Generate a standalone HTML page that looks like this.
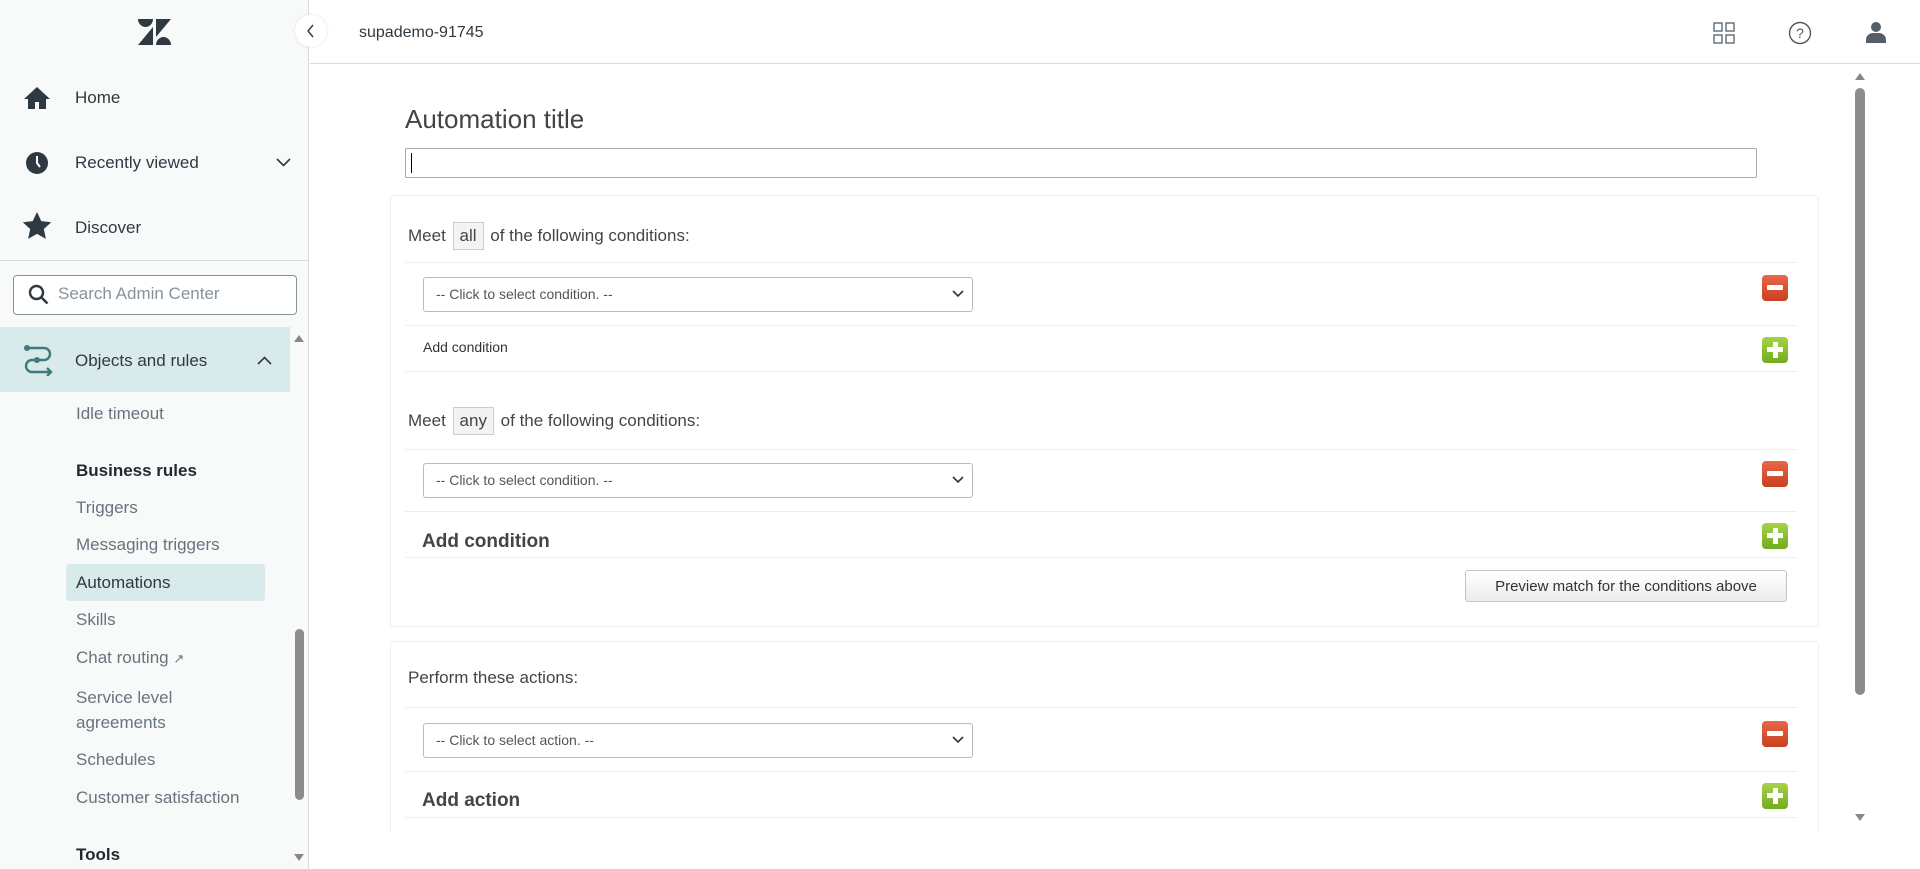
<!DOCTYPE html>
<html><head><meta charset="utf-8"><style>
*{box-sizing:border-box;margin:0;padding:0}
body{width:1920px;height:869px;overflow:hidden;background:#fff;font-family:"Liberation Sans",sans-serif;position:relative;color:#2f3941}
.a{position:absolute;white-space:nowrap}
.side{position:absolute;left:0;top:0;width:309px;height:869px;background:#f8f9f9;border-right:1px solid #d8dcde}
.nav{font-size:17px;color:#2f3941;line-height:20px}
.sub{font-size:17px;color:#68737d;line-height:20px;left:76px}
.sel{position:absolute;height:35px;border:1px solid #bbb;border-radius:3px;background:#fff;font-size:14px;color:#555;padding:8px 0 0 12px}
.sel svg{position:absolute;right:8px;top:12px}
.minus,.plus{position:absolute;width:26px;height:26px;border-radius:4px}
.minus{background:linear-gradient(#e8674a,#c8401f)}
.plus{background:linear-gradient(#a6d24a,#72ab1e)}
.minus:after{content:"";position:absolute;left:5px;top:10px;width:16px;height:5px;background:#fff;border-radius:1px}
.plus:after{content:"";position:absolute;left:5px;top:10px;width:16px;height:5px;background:#fff}
.plus:before{content:"";position:absolute;left:10.5px;top:5px;width:5px;height:16px;background:#fff}
.line{position:absolute;height:1px;background:#eeeeee}
.lab{font-size:17px;color:#444}
</style></head><body>
<div class="side">
 <svg class="a" style="left:138px;top:19px" width="33" height="26" viewBox="0 0 33 26"><path d="M0 0h15a7.5 8 0 0 1-15 0z" fill="#2f3941"/><polygon points="0,26 15,26 15,8" fill="#2f3941"/><polygon points="18,0 33,0 18,18" fill="#2f3941"/><path d="M18 26a7.5 8 0 0 1 15 0z" fill="#2f3941"/></svg>
 <svg class="a" style="left:23px;top:86px" width="28" height="24" viewBox="0 0 28 24"><path d="M14 1L1 13h4v10h7v-7h4v7h7V13h4z" fill="#2f3941"/></svg>
 <div class="a nav" style="left:75px;top:88px">Home</div>
 <svg class="a" style="left:25px;top:151px" width="24" height="24" viewBox="0 0 24 24"><circle cx="12" cy="12" r="11" fill="#2f3941"/><path d="M12 5v7l3 4" stroke="#fff" stroke-width="2" fill="none"/></svg>
 <div class="a nav" style="left:75px;top:153px">Recently viewed</div>
 <svg class="a" style="left:276px;top:158px" width="15" height="9" viewBox="0 0 15 9"><path d="M1 1l6.5 6.5L14 1" stroke="#2f3941" stroke-width="1.6" fill="none"/></svg>
 <svg class="a" style="left:22px;top:212px" width="30" height="28" viewBox="0 0 24 23"><path d="M12 0l3.5 7.5 8.2.9-6.1 5.6 1.7 8.1L12 18l-7.3 4.1 1.7-8.1L.3 8.4l8.2-.9z" fill="#2f3941"/></svg>
 <div class="a nav" style="left:75px;top:218px">Discover</div>
 <div class="a" style="left:0;top:260px;width:309px;height:1px;background:#d8dcde"></div>
 <div class="a" style="left:13px;top:275px;width:284px;height:40px;border:1px solid #87929d;border-radius:4px;background:#fff"></div>
 <svg class="a" style="left:28px;top:284px" width="22" height="22" viewBox="0 0 22 22"><circle cx="8.5" cy="8.5" r="6.5" stroke="#2f3941" stroke-width="2.4" fill="none"/><path d="M13.5 13.5l6 6" stroke="#2f3941" stroke-width="2.6"/></svg>
 <div class="a" style="left:58px;top:284px;font-size:17px;color:#87929d">Search Admin Center</div>
 <div class="a" style="left:0;top:327px;width:290px;height:65px;background:#d9eaeb"></div>
 <svg class="a" style="left:22px;top:343px" width="32" height="33" viewBox="0 0 32 33"><g stroke="#3d7a7b" stroke-width="2.4" fill="none"><path d="M5 5h17a6 6 0 0 1 0 12H10a6 6 0 0 0 0 12h18"/><path d="M25 25l4 4-4 4"/></g><circle cx="5" cy="5" r="3" fill="#3d7a7b"/><circle cx="15" cy="17" r="3" fill="#3d7a7b"/></svg>
 <div class="a nav" style="left:75px;top:351px">Objects and rules</div>
 <svg class="a" style="left:257px;top:356px" width="15" height="9" viewBox="0 0 15 9"><path d="M1 8l6.5-6.5L14 8" stroke="#2f3941" stroke-width="1.6" fill="none"/></svg>
 <div class="a sub" style="top:404px">Idle timeout</div>
 <div class="a" style="left:76px;top:461px;font-size:17px;font-weight:bold;color:#1f2a30">Business rules</div>
 <div class="a sub" style="top:498px">Triggers</div>
 <div class="a sub" style="top:535px">Messaging triggers</div>
 <div class="a" style="left:66px;top:564px;width:199px;height:37px;background:#d9eaeb;border-radius:3px"></div>
 <div class="a sub" style="top:573px;color:#2f3941">Automations</div>
 <div class="a sub" style="top:610px">Skills</div>
 <div class="a sub" style="top:648px">Chat routing <span style="font-size:13px">&#x2197;&#xFE0E;</span></div>
 <div class="a sub" style="top:688px">Service level</div>
 <div class="a sub" style="top:713px">agreements</div>
 <div class="a sub" style="top:750px">Schedules</div>
 <div class="a sub" style="top:788px">Customer satisfaction</div>
 <div class="a" style="left:76px;top:845px;font-size:17px;font-weight:bold;color:#1f2a30">Tools</div>
 <svg class="a" style="left:293px;top:333px" width="12" height="10"><path d="M1 9L6 2l5 7z" fill="#888"/></svg>
 <div class="a" style="left:295px;top:629px;width:9px;height:171px;background:#8c8c8c;border-radius:5px"></div>
 <svg class="a" style="left:293px;top:853px" width="12" height="10"><path d="M1 1l5 7 5-7z" fill="#888"/></svg>
</div>
<div class="a" style="left:295px;top:15px;width:32px;height:32px;border-radius:50%;background:#fff;box-shadow:0 0 3px rgba(0,0,0,.12)"></div>
<svg class="a" style="left:306px;top:24px" width="10" height="14"><path d="M7 1L2 7l5 6" stroke="#2f3941" stroke-width="1.4" fill="none"/></svg>
<div class="a" style="left:310px;top:63px;width:1610px;height:1px;background:#d8dcde"></div>
<div class="a" style="left:359px;top:24px;font-size:16px;color:#2f3941">supademo-91745</div>
<svg class="a" style="left:1713px;top:22px" width="22" height="22" viewBox="0 0 22 22"><g stroke="#68737d" stroke-width="1.5" fill="none"><rect x="1" y="1" width="8" height="8"/><rect x="13" y="1" width="8" height="8"/><rect x="1" y="13" width="8" height="8"/><rect x="13" y="13" width="8" height="8"/></g></svg>
<svg class="a" style="left:1788px;top:21px" width="24" height="24" viewBox="0 0 24 24"><circle cx="12" cy="12" r="10.5" stroke="#4d5760" stroke-width="1.4" fill="none"/><text x="12" y="17" font-size="14" text-anchor="middle" fill="#4d5760" font-family="Liberation Sans">?</text></svg>
<svg class="a" style="left:1866px;top:21px" width="20" height="22" viewBox="0 0 20 22"><circle cx="10" cy="6" r="5" fill="#555e66"/><path d="M0 22v-3a7 7 0 0 1 7-7h6a7 7 0 0 1 7 7v3z" fill="#555e66"/></svg>
<svg class="a" style="left:1854px;top:71px" width="12" height="10"><path d="M1 9L6 2l5 7z" fill="#888"/></svg>
<div class="a" style="left:1855px;top:88px;width:10px;height:607px;background:#8c8c8c;border-radius:5px"></div>
<svg class="a" style="left:1854px;top:813px" width="12" height="10"><path d="M1 1l5 7 5-7z" fill="#888"/></svg>

<div class="a" style="left:405px;top:104px;font-size:26px;color:#444">Automation title</div>
<div class="a" style="left:405px;top:148px;width:1352px;height:30px;border:1px solid #aaa;border-radius:2px"></div>
<div class="a" style="left:411px;top:153px;width:1px;height:20px;background:#000"></div>

<div class="a" style="left:390px;top:195px;width:1429px;height:432px;border:1px solid #efefef;border-radius:4px"></div>
<div class="a lab" style="left:408px;top:222px">Meet <span style="display:inline-block;border:1px solid #ccc;background:#f3f3f3;padding:3px 6px;margin:0 2px">all</span> of the following conditions:</div>
<div class="line" style="left:405px;top:262px;width:1392px"></div>
<div class="sel" style="left:423px;top:277px;width:550px">-- Click to select condition. --<svg width="12" height="8"><path d="M1 1l5 5 5-5" stroke="#333" stroke-width="1.6" fill="none"/></svg></div>
<div class="minus" style="left:1762px;top:275px"></div>
<div class="line" style="left:405px;top:325px;width:1392px"></div>
<div class="a" style="left:423px;top:339px;font-size:14px;color:#333">Add condition</div>
<div class="plus" style="left:1762px;top:337px"></div>
<div class="line" style="left:405px;top:371px;width:1392px"></div>
<div class="a lab" style="left:408px;top:407px">Meet <span style="display:inline-block;border:1px solid #ccc;background:#f3f3f3;padding:3px 6px;margin:0 2px">any</span> of the following conditions:</div>
<div class="line" style="left:405px;top:449px;width:1392px"></div>
<div class="sel" style="left:423px;top:463px;width:550px">-- Click to select condition. --<svg width="12" height="8"><path d="M1 1l5 5 5-5" stroke="#333" stroke-width="1.6" fill="none"/></svg></div>
<div class="minus" style="left:1762px;top:461px"></div>
<div class="line" style="left:405px;top:511px;width:1392px"></div>
<div class="a" style="left:422px;top:531px;font-size:19px;color:#444;font-weight:bold">Add condition</div>
<div class="plus" style="left:1762px;top:523px"></div>
<div class="line" style="left:405px;top:557px;width:1392px"></div>
<div class="a" style="left:1465px;top:570px;width:322px;height:32px;border:1px solid #c4c4c4;border-radius:3px;background:linear-gradient(#fff,#ececec);font-size:15px;color:#333;text-align:center;padding-top:7px">Preview match for the conditions above</div>

<div class="a" style="left:390px;top:641px;width:1429px;height:192px;border:1px solid #efefef;border-bottom:none;border-radius:4px 4px 0 0"></div>
<div class="a lab" style="left:408px;top:668px">Perform these actions:</div>
<div class="line" style="left:405px;top:707px;width:1392px"></div>
<div class="sel" style="left:423px;top:723px;width:550px">-- Click to select action. --<svg width="12" height="8"><path d="M1 1l5 5 5-5" stroke="#333" stroke-width="1.6" fill="none"/></svg></div>
<div class="minus" style="left:1762px;top:721px"></div>
<div class="line" style="left:405px;top:771px;width:1392px"></div>
<div class="a" style="left:422px;top:790px;font-size:19px;color:#444;font-weight:bold">Add action</div>
<div class="plus" style="left:1762px;top:783px"></div>
<div class="line" style="left:405px;top:817px;width:1392px"></div>
</body></html>
